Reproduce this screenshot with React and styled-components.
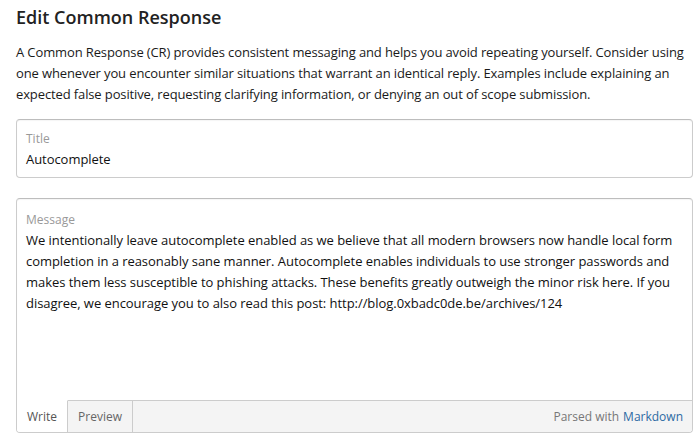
import React from "react";
import styled, { createGlobalStyle } from "styled-components";

const Global = createGlobalStyle`
  html, body { margin: 0; padding: 0; background: #fff; }
  body { font-family: "Open Sans", "Noto Sans", Arial, sans-serif; color: #222; }
`;

const Page = styled.div`
  padding: 4px 6px 0 16px;
  width: 677px;
`;

const Heading = styled.h1`
  margin: 0;
  font-size: 18px;
  font-weight: 600;
  line-height: 26px;
  color: #222;
`;

const Intro = styled.p`
  margin: 12px 0 14px;
  font-size: 13px;
  line-height: 21px;
  color: #1a1a1a;
  white-space: nowrap;
  letter-spacing: -0.12px;
`;

const Field = styled.div`
  border: 1px solid #ccc;
  border-top-color: #bdbdbd;
  border-radius: 4px;
  background: #fff;
  box-shadow: inset 0 1px 1px rgba(0, 0, 0, 0.04);
  margin-bottom: 20px;
  overflow: hidden;
  display: flex;
  flex-direction: column;
`;

const FieldBody = styled.div`
  padding: ${(p) => (p.$tall ? "10px 9px 0" : "9px 9px 8px")};
  height: ${(p) => (p.$tall ? "201px" : "auto")};
  box-sizing: border-box;
`;

const Label = styled.div`
  font-size: 12px;
  line-height: ${(p) => (p.$tall ? "21px" : "20px")};
  color: #999;
`;

const Value = styled.div`
  font-size: 13px;
  line-height: ${(p) => (p.$tall ? "21px" : "20px")};
  color: #111;
  letter-spacing: -0.05px;
`;

const Footer = styled.div`
  display: flex;
  align-items: stretch;
  height: 32px;
  background: #f4f4f4;
`;

const Tab = styled.div`
  display: flex;
  align-items: center;
  padding: 0 10px;
  font-size: 12px;
  color: ${(p) => (p.$active ? "#555" : "#666")};
  background: ${(p) => (p.$active ? "#fff" : "#f4f4f4")};
  border-top: 1px solid ${(p) => (p.$active ? "#fff" : "#ccc")};
  border-right: 1px solid #ccc;
`;

const Spacer = styled.div`
  flex: 1;
  border-top: 1px solid #ccc;
  display: flex;
  align-items: center;
  justify-content: flex-end;
  padding-right: 9px;
  font-size: 12px;
  color: #777;
`;

const Link = styled.span`
  color: #2d6aa3;
  margin-left: 4px;
`;

export default function App() {
  return (
    <>
      <Global />
      <Page>
        <Heading>Edit Common Response</Heading>
        <Intro>
          A Common Response (CR) provides consistent messaging and helps you avoid repeating yourself. Consider using
          <br />
          one whenever you encounter similar situations that warrant an identical reply. Examples include explaining an
          <br />
          expected false positive, requesting clarifying information, or denying an out of scope submission.
        </Intro>
        <Field>
          <FieldBody>
            <Label>Title</Label>
            <Value>Autocomplete</Value>
          </FieldBody>
        </Field>
        <Field>
          <FieldBody $tall>
            <Label $tall>Message</Label>
            <Value $tall>
              We intentionally leave autocomplete enabled as we believe that all modern browsers now handle local form
              completion in a reasonably sane manner. Autocomplete enables individuals to use stronger passwords and
              makes them less susceptible to phishing attacks. These benefits greatly outweigh the minor risk here. If you
              disagree, we encourage you to also read this post: http://blog.0xbadc0de.be/archives/124
            </Value>
          </FieldBody>
          <Footer>
            <Tab $active>Write</Tab>
            <Tab>Preview</Tab>
            <Spacer>
              Parsed with<Link>Markdown</Link>
            </Spacer>
          </Footer>
        </Field>
      </Page>
    </>
  );
}
